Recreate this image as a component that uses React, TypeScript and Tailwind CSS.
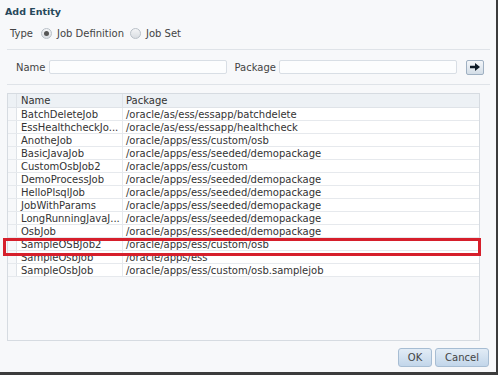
const rows: [string, string][] = [
  ["BatchDeleteJob", "/oracle/as/ess/essapp/batchdelete"],
  ["EssHealthcheckJo...", "/oracle/as/ess/essapp/healthcheck"],
  ["AnotheJob", "/oracle/apps/ess/custom/osb"],
  ["BasicJavaJob", "/oracle/apps/ess/seeded/demopackage"],
  ["CustomOsbJob2", "/oracle/apps/ess/custom"],
  ["DemoProcessJob", "/oracle/apps/ess/seeded/demopackage"],
  ["HelloPlsqlJob", "/oracle/apps/ess/seeded/demopackage"],
  ["JobWithParams", "/oracle/apps/ess/seeded/demopackage"],
  ["LongRunningJavaJ...", "/oracle/apps/ess/seeded/demopackage"],
  ["OsbJob", "/oracle/apps/ess/seeded/demopackage"],
  ["SampleOSBJob2", "/oracle/apps/ess/custom/osb"],
  ["SampleOsbJob", "/oracle/apps/ess"],
  ["SampleOsbJob", "/oracle/apps/ess/custom/osb.samplejob"],
];

const Radio = ({ checked, label }: { checked?: boolean; label: string }) => (
  <label className="flex items-center gap-[5px]">
    <span className="w-[11px] h-[11px] rounded-full border border-[#b9c0c8] bg-gradient-to-b from-[#f4f5f7] to-[#d9dde2] flex items-center justify-center">
      {checked && <span className="w-[5px] h-[5px] rounded-full bg-[#555]" />}
    </span>
    <span>{label}</span>
  </label>
);

export default function App() {
  return (
    <div className="w-[500px] h-[378px] bg-white font-['DejaVu_Sans',sans-serif] text-[10px] text-[#333]">
      <div className="relative w-[498px] h-[375px] bg-[#f7f8fa] border-r-[2px] border-b-[3px] border-[#3c3c3c] flex flex-col">
        {/* 제목 */}
        <div className="h-[23px] pl-[5px] pt-[5px] font-bold text-[9.5px] text-[#27485a]">Add Entity</div>

        <div className="h-[19px] mt-[1px] flex items-center pl-[10px] gap-[6px] text-[#444]">
          <span className="mr-[2px]">Type</span>
          <Radio checked label="Job Definition" />
          <Radio label="Job Set" />
        </div>

        <div className="mx-[7px] mt-[6px] h-px bg-[#dfe3e8] w-[483px]" />

        {/* 검색 */}
        <div className="h-[34px] flex items-center pl-[16px] text-[#444]">
          <span>Name</span>
          <div className="ml-[3px] w-[178px] h-[14px] bg-[#fcfdfe] border border-[#d8dee5] rounded-[2px]" />
          <span className="ml-[8px]">Package</span>
          <div className="ml-[3px] w-[178px] h-[14px] bg-[#fcfdfe] border border-[#d8dee5] rounded-[2px]" />
          <button className="ml-[9px] w-[18px] h-[15px] rounded-[2px] border border-[#9fb0c2] bg-gradient-to-b from-[#f3f6f9] to-[#d3dde7] flex items-center justify-center">
            <svg width="10" height="8" viewBox="0 0 10 8">
              <path d="M0 2.7h5V0l5 4-5 4V5.3H0z" fill="#0d1a26" />
            </svg>
          </button>
        </div>

        <div className="mx-[7px] h-px bg-[#dfe3e8] w-[483px]" />

        {/* 목록 */}
        <div className="ml-[7px] mt-[8px] w-[473px] h-[248px] border border-[#d6dbe1] bg-[#f7f8fa] flex flex-col">
          <div className="flex h-[14px] bg-[#edf1f5] border-b border-[#dfe3e8] leading-[14px]">
            <div className="w-[9px] h-full border-r border-[#dfe3e8]" />
            <div className="w-[106px] pl-[4px] h-full border-r border-[#dfe3e8]">Name</div>
            <div className="flex-1 pl-[3px]">Package</div>
          </div>
          {rows.map(([name, pkg], i) => (
            <div key={i} className="flex h-[13px] bg-white border-b border-[#e6e9ed] leading-[13px]">
              <div className="w-[9px] h-full border-r border-[#dfe3e8] bg-[#f7f8fa]" />
              <div className="w-[106px] pl-[4px] h-full border-r border-[#e6e9ed] whitespace-nowrap overflow-hidden">{name}</div>
              <div className="flex-1 pl-[3px] whitespace-nowrap">{pkg}</div>
            </div>
          ))}
        </div>

        <div className="flex justify-end gap-[3px] pr-[7px] mt-[7px]">
          <button className="w-[34px] h-[19px] rounded-[3px] border border-[#a7bdd3] bg-gradient-to-b from-[#e2ecf6] to-[#c2d6ea] text-[#444]">OK</button>
          <button className="w-[54px] h-[19px] rounded-[3px] border border-[#a7bdd3] bg-gradient-to-b from-[#e2ecf6] to-[#c2d6ea] text-[#444]">Cancel</button>
        </div>

        {/* 강조 표시 */}
        <div className="absolute left-[3px] top-[238px] w-[478px] h-[18px] border-[3px] border-[#d61f2b]" />
      </div>
    </div>
  );
}
